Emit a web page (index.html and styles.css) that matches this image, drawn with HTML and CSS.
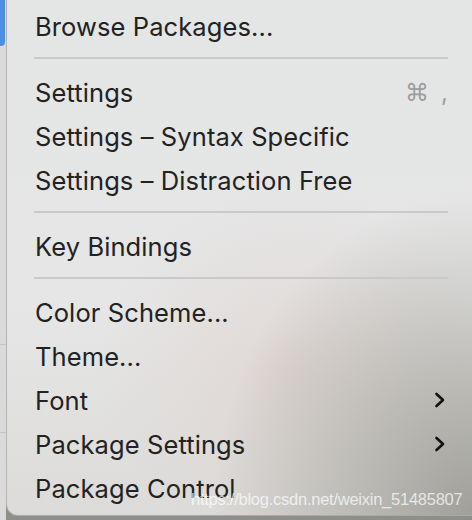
FILE: index.html
```html
<!DOCTYPE html>
<html>
<head>
<meta charset="utf-8">
<link rel="stylesheet" href="styles.css">
</head>
<body>
<div class="screen">
  <div class="behind">
    <div class="behind-highlight"></div>
    <div class="behind-rule r1"></div>
    <div class="behind-rule r2"></div>
  </div>
  <div class="menu">
    <div class="item"><span class="label">Browse Packages...</span></div>
    <div class="sep"></div>
    <div class="item"><span class="label">Settings</span><span class="shortcut"><span class="cmd">⌘</span><span class="comma">,</span></span></div>
    <div class="item"><span class="label">Settings – Syntax Specific</span></div>
    <div class="item"><span class="label">Settings – Distraction Free</span></div>
    <div class="sep"></div>
    <div class="item"><span class="label">Key Bindings</span></div>
    <div class="sep"></div>
    <div class="item"><span class="label">Color Scheme...</span></div>
    <div class="item"><span class="label">Theme...</span></div>
    <div class="item"><span class="label">Font</span>
      <svg class="chev" width="12" height="16" viewBox="0 0 12 16"><path d="M2.5 2 L9 8 L2.5 14" fill="none" stroke="#111" stroke-width="2.6" stroke-linecap="round" stroke-linejoin="round"/></svg>
    </div>
    <div class="item"><span class="label">Package Settings</span>
      <svg class="chev" width="12" height="16" viewBox="0 0 12 16"><path d="M2.5 2 L9 8 L2.5 14" fill="none" stroke="#111" stroke-width="2.6" stroke-linecap="round" stroke-linejoin="round"/></svg>
    </div>
    <div class="item"><span class="label">Package Control</span></div>
    <div class="watermark">https://blog.csdn.net/weixin_51485807</div>
  </div>
</div>
</body>
</html>
```
FILE: styles.css
```css
html, body {
  margin: 0;
  padding: 0;
}
body {
  width: 472px;
  height: 520px;
  overflow: hidden;
  background: #8f8f8a;
  font-family: Inter, "Liberation Sans", sans-serif;
}
.screen {
  display: flex;
  height: 520px;
}
.behind {
  position: relative;
  width: 6px;
  flex: none;
  background: #dadada;
}
.behind-highlight {
  position: absolute;
  left: 0;
  top: 0;
  width: 5px;
  height: 46px;
  background: #4b8fe6;
  border-radius: 0 0 4px 0;
}
.behind-rule {
  position: absolute;
  left: 0;
  width: 6px;
  height: 1px;
  background: #c4c4c4;
}
.r1 { top: 344px; }
.r2 { top: 432px; }
.menu {
  position: relative;
  flex: 1;
  min-width: 0;
  height: 516px;
  box-sizing: border-box;
  padding: 4px 0 0 0;
  border-left: 1px solid #b4b4b4;
  border-bottom: 1px solid #a9a9a9;
  border-bottom-left-radius: 12px;
  overflow: hidden;
  background:
    radial-gradient(ellipse 260px 320px at 100% 100%, rgba(150,150,142,0.85), rgba(150,150,142,0) 100%),
    radial-gradient(ellipse 200px 180px at 62% 72%, rgba(220,205,200,0.5), rgba(220,205,200,0) 100%),
    linear-gradient(180deg, #e4e5e5 0%, #e6e6e6 60%, #dcdbd9 100%);
}
.item {
  display: flex;
  align-items: center;
  justify-content: space-between;
  height: 44px;
  padding: 0 26px 0 28px;
  color: #222222;
  font-size: 25.5px;
  letter-spacing: 0.1px;
}
.shortcut {
  display: flex;
  align-items: baseline;
  color: #9d9d9d;
  margin-right: -2px;
}
.cmd {
  font-family: "DejaVu Sans", sans-serif;
  font-size: 24px;
}
.comma {
  margin-left: 12px;
  font-size: 24px;
}
.chev {
  display: block;
}
.sep {
  height: 22px;
  box-sizing: border-box;
  padding-top: 9px;
  margin: 0 24px 0 27px;
}
.sep::before {
  content: "";
  display: block;
  height: 2px;
  background: #c9c9c9;
}
.watermark {
  position: absolute;
  left: 184px;
  top: 490px;
  white-space: nowrap;
  color: rgba(255,255,255,0.72);
  font-family: "Liberation Sans", Arial, sans-serif;
  font-size: 16.5px;
  letter-spacing: -0.25px;
}
```
